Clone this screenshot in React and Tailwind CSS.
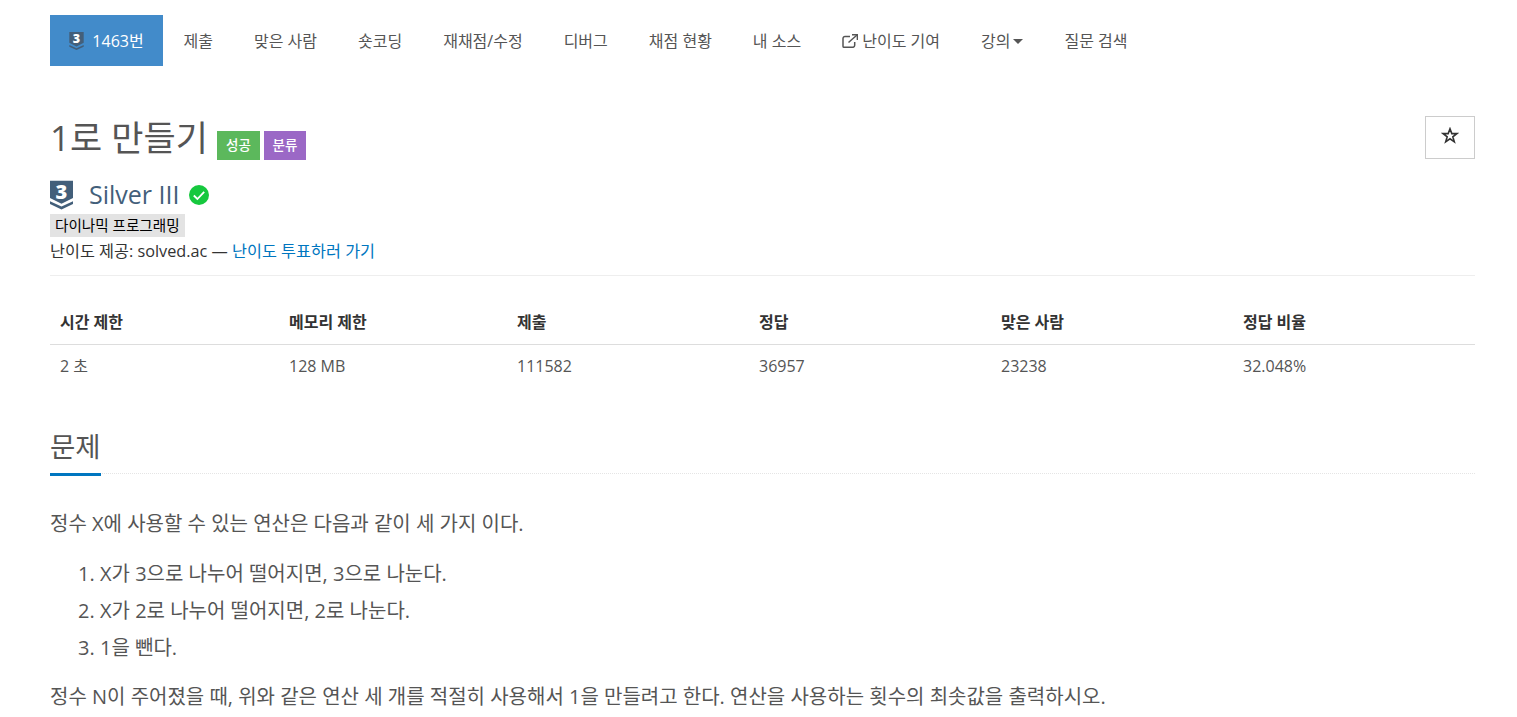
const FONT = "font-['Open_Sans','Noto_Sans_CJK_KR',sans-serif]";

const navItems = ["제출", "맞은 사람", "숏코딩", "재채점/수정", "디버그", "채점 현황", "내 소스"];

const SilverBadge = ({ className }) => (
  <svg viewBox="0 0 24 30" className={`overflow-visible ${className}`}>
    <path d="M0 0H24V18L12 24L0 18Z" fill="#435F7A" />
    <path d="M0 21.5L12 27L24 21.5V24.5L12 30L0 24.5Z" fill="#435F7A" />
    <text x="12" y="19" textAnchor="middle" fontSize="21" fontWeight="800" fill="#fff" fontFamily="Open Sans, sans-serif">
      3
    </text>
  </svg>
);

const App = () => {
  return (
    <div className={`${FONT} h-[717px] overflow-hidden bg-white pl-[50px] pr-[42px] pt-[15px] text-[#555]`}>
      {/* Nav */}

      <nav className="flex h-[51px] items-center text-[16px]">
        <a className="flex h-full w-[113px] items-center justify-center gap-[8px] bg-[#428bca] text-white">
          <SilverBadge className="h-[18px] w-[15px]" />
          1463번
        </a>
        {navItems.map((item) => (
          <a key={item} className="px-[20.5px]">
            {item}
          </a>
        ))}
        <a className="flex items-center gap-[4px] px-[20.5px]">
          <svg viewBox="0 0 16 14" className="h-[14px] w-[16px]" fill="none" stroke="#555" strokeWidth="1.5">
            <path d="M8 2.5H3a2 2 0 0 0-2 2v7.7a1.1 1.1 0 0 0 1.1 1.1h8.6a2 2 0 0 0 2-2V8" />
            <path d="M6.5 8.5L15 1" />
            <path d="M10 .8H15.4V6" />
          </svg>
          난이도 기여
        </a>
        <a className="flex items-center px-[20.5px]">
          강의
          <span className="ml-[3px] mt-[2px] border-x-[5px] border-t-[5px] border-x-transparent border-t-[#555]" />
        </a>
        <a className="px-[20.5px]">질문 검색</a>
      </nav>

      {/* Title */}

      <div className="mt-[50px] flex items-start justify-between">
        <div className="flex items-end">
          <h1 className="text-[35px] leading-[44px] text-[#555]">1로 만들기</h1>
          <span className="ml-[9px] flex h-[29px] w-[43px] items-center justify-center bg-[#5cb85c] text-[13.5px] font-medium text-white">
            성공
          </span>
          <span className="ml-[4px] flex h-[29px] w-[42px] items-center justify-center bg-[#9b68c6] text-[13.5px] font-medium text-white">
            분류
          </span>
        </div>
        <button className="flex h-[43px] w-[50px] items-center justify-center border border-[#ccc] text-[#333]">
          <svg viewBox="0 0 18 17" className="mb-[4px] h-[17px] w-[18px]">
            <path
              d="M9 1.8L10.8 6.6H15.9L11.8 9.8L13.3 14.8L9 11.8L4.7 14.8L6.2 9.8L2.1 6.6H7.2Z"
              fill="none"
              stroke="#333"
              strokeWidth="1.6"
            />
          </svg>
        </button>
      </div>

      {/* Tier */}

      <div className="mt-[20px] flex h-[30px] items-center">
        <SilverBadge className="h-[30px] w-[23px]" />
        <span className="-mt-[3px] ml-[16px] text-[25px] leading-[30px] text-[#435f7a]">Silver III</span>
        <svg viewBox="0 0 20 20" className="ml-[9px] h-[20px] w-[20px]">
          <circle cx="10" cy="10" r="10" fill="#16c83e" />
          <path d="M4.8 10.5L8.4 14L15.2 6.8" fill="none" stroke="#fff" strokeWidth="1.8" />
        </svg>
      </div>

      <div className="mt-[4px] flex">
        <span className="bg-[#e3e3e3] px-[5px] text-[14.6px] leading-[23px] text-black">다이나믹 프로그래밍</span>
      </div>
      <p className="pt-[1px] text-[16.25px] leading-[27px] text-[#333]">
        난이도 제공: solved.ac — <a className="text-[#0076c0]">난이도 투표하러 가기</a>
      </p>

      <hr className="mt-[10px] border-[#eee]" />

      {/* Info table */}

      <div className="mt-[24px] grid grid-cols-[229px_228px_242px_242px_242px_242px] text-[16px] text-[#333]">
        {["시간 제한", "메모리 제한", "제출", "정답", "맞은 사람", "정답 비율"].map((head) => (
          <div key={head} className="h-[45px] border-b border-[#ddd] px-[10px] pt-[10px] font-bold">
            {head}
          </div>
        ))}
        {["2 초", "128 MB", "111582", "36957", "23238", "32.048%"].map((value) => (
          <div key={value} className="px-[10px] pt-[11px] leading-[20px] text-[#555]">
            {value}
          </div>
        ))}
      </div>

      {/* Problem */}

      <div className="mt-[51px] border-b border-dotted border-[#e5e5e5]">
        <h2 className="-mb-[3px] inline-block border-b-[3px] border-[#0076c0] pb-[6px] align-top text-[27.5px] leading-[40px] text-[#555]">
          문제
        </h2>
      </div>

      <div className="mt-[35px] text-[20px] text-[#555]">
        <p className="leading-[30px]">정수 X에 사용할 수 있는 연산은 다음과 같이 세 가지 이다.</p>
        <ol className="mt-[16px] list-decimal pl-[50px] leading-[37px]">
          <li>X가 3으로 나누어 떨어지면, 3으로 나눈다.</li>
          <li>X가 2로 나누어 떨어지면, 2로 나눈다.</li>
          <li>1을 뺀다.</li>
        </ol>
        <p className="mt-[16px] leading-[30px]">
          정수 N이 주어졌을 때, 위와 같은 연산 세 개를 적절히 사용해서 1을 만들려고 한다. 연산을 사용하는 횟수의 최솟값을 출력하시오.
        </p>
      </div>
    </div>
  );
};

export default App;
